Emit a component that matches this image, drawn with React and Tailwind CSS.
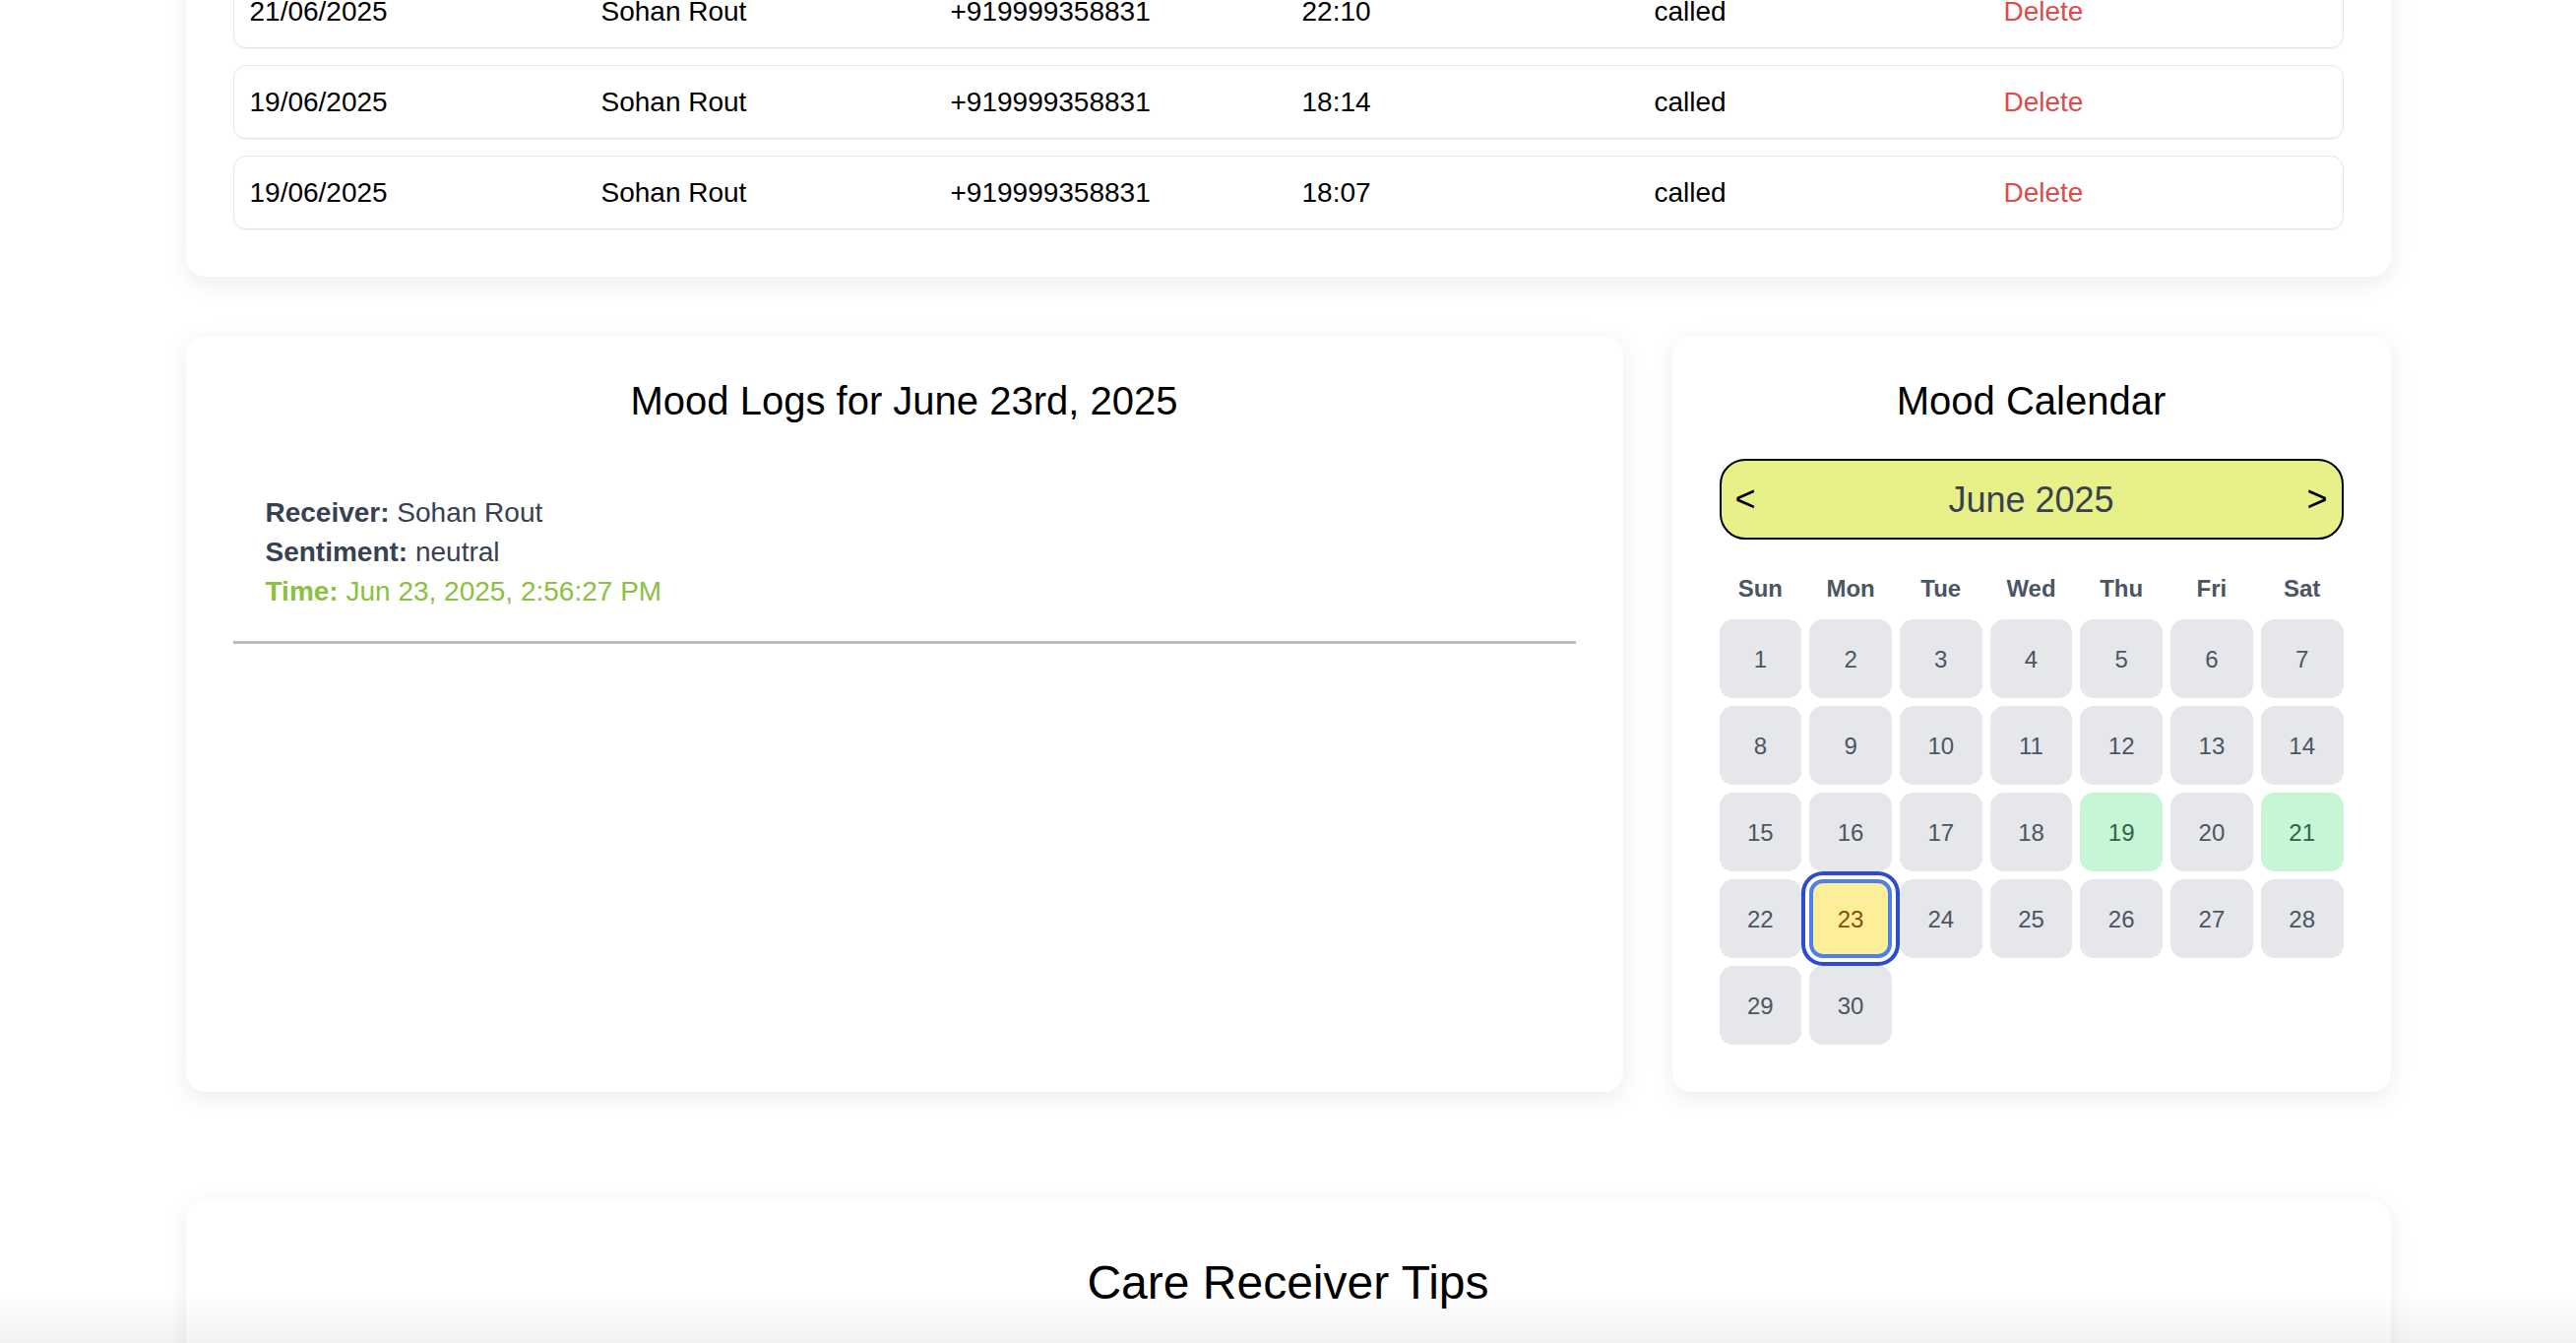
import React from 'react';

const calls = [
  { date: '21/06/2025', name: 'Sohan Rout', phone: '+919999358831', time: '22:10', status: 'called' },
  { date: '19/06/2025', name: 'Sohan Rout', phone: '+919999358831', time: '18:14', status: 'called' },
  { date: '19/06/2025', name: 'Sohan Rout', phone: '+919999358831', time: '18:07', status: 'called' },
];

const weekDays = ['Sun', 'Mon', 'Tue', 'Wed', 'Thu', 'Fri', 'Sat'];
const days = Array.from({ length: 30 }, (_, i) => i + 1);
const loggedDays = [19, 21];
const selectedDay = 23;

function CallRow({ call }) {
  return (
    <div className="grid grid-cols-[357px_355px_357px_358px_355px_1fr] items-center h-[75px] pl-4 border border-[#e5e5ea] rounded-[13px] shadow-[0_1px_2px_rgba(0,0,0,0.06)] text-[28px] text-black">
      <span>{call.date}</span>
      <span>{call.name}</span>
      <span>{call.phone}</span>
      <span>{call.time}</span>
      <span>{call.status}</span>
      <button type="button" className="text-left text-[#e04a4a]">Delete</button>
    </div>
  );
}

function DayCell({ day }) {
  const isSelected = day === selectedDay;
  const isLogged = loggedDays.includes(day);

  let cls = 'bg-[#e5e7eb] text-[#4b5563]';
  if (isLogged) cls = 'bg-[#c6f6d5] text-[#276749]';
  if (isSelected) {
    cls =
      'bg-[#fdef9a] text-[#854d0e] border-4 border-[#4f80ea] ring-4 ring-[#2b4bd0] ring-offset-4 ring-offset-white';
  }

  return (
    <button
      type="button"
      className={`h-20 pt-[2px] rounded-[14px] flex items-center justify-center text-[24px] ${cls}`}
    >
      {day}
    </button>
  );
}

export default function App() {
  return (
    <div className="relative min-h-screen overflow-hidden bg-white font-['Liberation_Sans',Arial,sans-serif]">
      <div className="w-[2240px] mx-auto -mt-[74px] pb-24">
        {/* Call logs */}
        <div className="bg-white rounded-[20px] shadow-[0_6px_24px_rgba(0,0,0,0.08)] p-12 flex flex-col gap-[17px]">
          {calls.map((c, i) => (
            <CallRow key={i} call={c} />
          ))}
        </div>

        {/* Mood logs + calendar */}
        <div className="grid grid-cols-[2fr_1fr] gap-[50px] mt-[60px]">
          <div className="bg-white rounded-[20px] shadow-[0_6px_24px_rgba(0,0,0,0.08)] px-12 pt-[46px]">
            <h2 className="text-[40px] leading-none text-center text-black">
              Mood Logs for June 23rd, 2025
            </h2>
            <div className="mt-[74px] px-[33px] pb-[30px] border-b-[3px] border-[#bdbdbd] text-[28px] leading-[40px] text-[#374151]">
              <p>
                <span className="font-bold">Receiver:</span> Sohan Rout
              </p>
              <p>
                <span className="font-bold">Sentiment:</span> neutral
              </p>
              <p className="text-[#8ac140]">
                <span className="font-bold">Time:</span> Jun 23, 2025, 2:56:27 PM
              </p>
            </div>
          </div>

          <div className="bg-white rounded-[20px] shadow-[0_6px_24px_rgba(0,0,0,0.08)] px-12 pt-[46px] pb-12">
            <h2 className="text-[40px] leading-none text-center text-black">Mood Calendar</h2>
            <div className="mt-[39px] h-[82px] flex items-center justify-between px-[14px] bg-[#e8f08a] border-2 border-black rounded-[26px]">
              <button type="button" className="text-[36px] text-black leading-none">&lt;</button>
              <span className="text-[36px] text-[#374151] pt-[2px]">June 2025</span>
              <button type="button" className="text-[36px] text-black leading-none">&gt;</button>
            </div>
            <div className="grid grid-cols-7 gap-2 mt-[34px]">
              {weekDays.map((d) => (
                <div key={d} className="text-center text-[24px] leading-8 font-bold text-[#4b5563]">
                  {d}
                </div>
              ))}
            </div>
            <div className="grid grid-cols-7 gap-2 mt-[15px]">
              {days.map((d) => (
                <DayCell key={d} day={d} />
              ))}
            </div>
          </div>
        </div>

        {/* Tips */}
        <div className="mt-[110px] bg-white rounded-[20px] shadow-[0_6px_24px_rgba(0,0,0,0.08)] px-12 pt-[60px] pb-24">
          <h2 className="text-[48px] leading-none text-center text-black">Care Receiver Tips</h2>
        </div>
      </div>

      {/* bottom fade */}
      <div className="pointer-events-none fixed left-0 right-0 bottom-0 h-[50px] bg-linear-to-b from-transparent to-black/[0.05]" />
    </div>
  );
}
